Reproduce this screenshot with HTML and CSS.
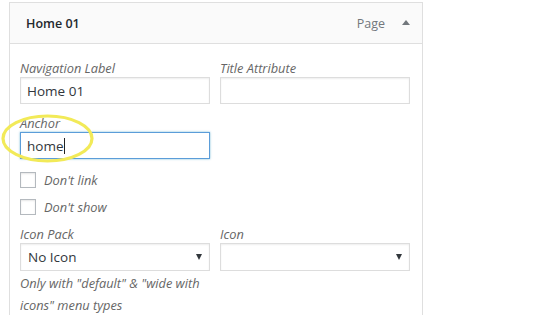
FILE: index.html
```html
<!DOCTYPE html>
<html>
<head>
<meta charset="utf-8">
<link rel="stylesheet" href="styles.css">
</head>
<body>
<div class="wrap">
  <div class="item">
    <div class="head">
      <span class="title">Home 01</span>
      <span class="controls"><span class="type">Page</span><span class="toggle"></span></span>
    </div>
    <div class="settings">
      <div class="row">
        <label class="field">
          <span class="lbl">Navigation Label</span>
          <span class="input">Home 01</span>
        </label>
        <label class="field">
          <span class="lbl">Title Attribute</span>
          <span class="input"></span>
        </label>
      </div>
      <div class="row row-anchor">
        <label class="field">
          <span class="lbl">Anchor</span>
          <span class="input focus">home<span class="caret"></span></span>
          <svg class="ring" width="98" height="54" viewBox="0 0 98 54"><ellipse cx="46.5" cy="26.5" rx="44.5" ry="22.5" fill="none" stroke="#f2ea58" stroke-width="3.2"/></svg>
        </label>
      </div>
      <div class="checks">
        <div class="check"><span class="box"></span><span class="clbl">Don't link</span></div>
        <div class="check"><span class="box"></span><span class="clbl">Don't show</span></div>
      </div>
      <div class="row row-icons">
        <div class="field">
          <span class="lbl">Icon Pack</span>
          <span class="input select">No Icon<span class="arrow"></span></span>
          <span class="help">Only with "default" &amp; "wide with icons" menu types</span>
        </div>
        <div class="field">
          <span class="lbl">Icon</span>
          <span class="input select"><span class="arrow"></span></span>
        </div>
      </div>
    </div>
  </div>
</div>
</body>
</html>
```
FILE: styles.css
```css
* { box-sizing: border-box; }
html, body { margin: 0; background: #fff; }
body {
  font-family: "Open Sans", "Noto Sans", sans-serif;
  font-size: 13px;
  color: #32373c;
  overflow: hidden;
  height: 315px;
}
.wrap { padding: 2px 0 0 9px; height: 315px; overflow: hidden; }
.item {
  width: 414px;
  height: 313px;
  border: 1px solid #dfdfdf;
  border-bottom: none;
  background: #fff;
}
.head {
  height: 41px;
  background: #fafafa;
  border-bottom: 1px solid #dfdfdf;
  display: flex;
  align-items: center;
  justify-content: space-between;
  padding: 0 12px 0 16px;
}
.title { font-weight: 600; font-size: 12.5px; color: #23282d; }
.controls { display: flex; align-items: center; gap: 17px; }
.type { color: #72777c; font-size: 12.5px; }
.toggle {
  width: 0; height: 0;
  border-left: 4px solid transparent;
  border-right: 4px solid transparent;
  border-bottom: 5px solid #72777c;
  margin-top: -1px;
}
.settings { padding: 16px 11px 0 10px; }
.row { display: flex; gap: 10px; }
.row-anchor { margin-top: 11px; }
.field { display: flex; flex-direction: column; width: 190px; position: relative; }
.lbl {
  font-style: italic;
  color: #666;
  line-height: 17px;
  height: 17px;
  font-size: 12.8px;
  white-space: nowrap;
}
.input {
  display: flex;
  align-items: center;
  height: 27px;
  border: 1px solid #ddd;
  box-shadow: inset 0 1px 2px rgba(0,0,0,0.07);
  padding: 0 6px;
  font-size: 13.5px;
  color: #32373c;
  background: #fff;
}
.input.focus { border-color: #5b9dd9; box-shadow: 0 0 2px rgba(30,140,190,0.6); }
.caret { width: 1px; height: 16px; background: #222; margin-left: 1px; }
.ring { position: absolute; left: -19px; top: -3px; }
.checks { margin-top: 7px; }
.check { display: flex; align-items: center; height: 27px; gap: 8px; }
.box {
  width: 16px; height: 16px;
  border: 1px solid #b4b9be;
  background: #fff;
  box-shadow: inset 0 1px 2px rgba(0,0,0,0.1);
}
.clbl { font-style: italic; color: #666; font-size: 12.8px; }
.row-icons { margin-top: 6px; }
.select { justify-content: space-between; padding: 0 6px 0 7px; height: 28px; }
.arrow {
  width: 0; height: 0;
  border-left: 3.5px solid transparent;
  border-right: 3.5px solid transparent;
  border-top: 6px solid #32373c;
  margin-left: auto;
  margin-right: 1px;
}
.help {
  font-style: italic;
  color: #666;
  line-height: 22px;
  font-size: 12.8px;
  margin-top: 1px;
}
```
